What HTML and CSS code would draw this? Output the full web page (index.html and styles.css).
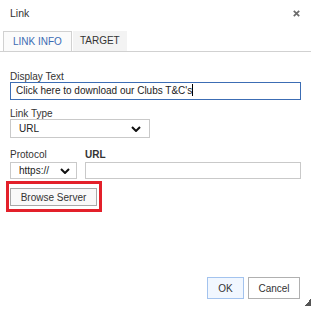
FILE: index.html
```html
<!DOCTYPE html>
<html lang="en">
<head>
  <meta charset="UTF-8" />
  <title>Link</title>
  <link rel="stylesheet" href="styles.css">
</head>
<body>

<div class="dialog">
  <div class="title-bar">
    <span class="title">Link</span>
    <svg class="close" width="7" height="7" viewBox="0 0 7 7">
      <path d="M0.8 0.8 L6.2 6.2 M6.2 0.8 L0.8 6.2" stroke="#6b6b6b" stroke-width="1.7" />
    </svg>
  </div>

  <div class="tabs">
    <div class="tab tab-active">LINK INFO</div>
    <div class="tab">TARGET</div>
  </div>

  <div class="content">
    <label class="field-label">Display Text</label>
    <div class="input input-focus">Click here to download our Clubs T&amp;C's<span class="caret"></span></div>

    <label class="field-label label-gap">Link Type</label>
    <div class="select select-type">
      <span>URL</span>
      <svg width="10" height="6" viewBox="0 0 10 6"><path d="M1 1 L5 5 L9 1" fill="none" stroke="#111" stroke-width="2" /></svg>
    </div>

    <div class="url-row">
      <div class="protocol">
        <label class="field-label">Protocol</label>
        <div class="select select-protocol">
          <span>https://</span>
          <svg width="10" height="6" viewBox="0 0 10 6"><path d="M1 1 L5 5 L9 1" fill="none" stroke="#111" stroke-width="2" /></svg>
        </div>
      </div>
      <div class="url">
        <label class="field-label bold">URL</label>
        <div class="input input-url"></div>
      </div>
    </div>

    <div class="highlight">
      <div class="button browse">Browse Server</div>
    </div>
  </div>

  <div class="footer">
    <div class="button ok">OK</div>
    <div class="button cancel">Cancel</div>
  </div>

  <div class="grip"></div>
</div>

</body>
</html>
```

FILE: styles.css
```css
* { margin: 0; padding: 0; box-sizing: border-box; }

body {
  font-family: 'Liberation Sans', Arial, sans-serif;
  font-size: 10px;
  color: #333;
  background: #fff;
}

.dialog {
  position: relative;
  width: 311px;
  height: 307px;
  display: flex;
  flex-direction: column;
}

.title-bar {
  height: 31px;
  padding: 7px 11px 0 10px;
  display: flex;
  justify-content: space-between;
  align-items: flex-start;
}

.title {
  font-size: 10.5px;
  line-height: 12px;
  color: #333;
}

.close {
  margin-top: 3px;
}

.tabs {
  height: 21px;
  padding-left: 3px;
  display: flex;
  gap: 1px;
  border-bottom: 1px solid #d1d1d1;
}

.tab {
  height: 20px;
  line-height: 20px;
  padding: 0 7px;
  background: #f3f3f3;
  color: #333;
}

.tab-active {
  padding: 0 9px;
  background: #fbfbfb;
  color: #3b6bb3;
  border: 1px solid #d1d1d1;
  border-bottom: none;
  line-height: 19px;
}

.content {
  padding: 20px 10px 0 10px;
  display: flex;
  flex-direction: column;
}

.field-label {
  display: block;
  height: 10px;
  line-height: 10px;
  color: #333;
}

.label-gap {
  margin-top: 9px;
}

.bold {
  font-weight: bold;
}

.input {
  height: 18px;
  line-height: 16px;
  padding: 0 5px;
  border: 1px solid #c9c9c9;
  background: #fff;
  color: #222;
  white-space: nowrap;
}

.input-focus {
  border-color: #3c6db4;
}

.caret {
  display: inline-block;
  width: 1px;
  height: 12px;
  background: #000;
  vertical-align: -2px;
}

.select {
  display: flex;
  justify-content: space-between;
  align-items: center;
  border: 1px solid #c9c9c9;
  background: #fff;
  color: #222;
  padding: 0 8px 0 8px;
}

.select-type {
  width: 140px;
  height: 19px;
}

.url-row {
  margin-top: 12px;
  display: flex;
  gap: 8px;
}

.url-row .field-label {
  margin-bottom: 2px;
}

.protocol {
  width: 67px;
}

.select-protocol {
  height: 17px;
  padding: 0 6px 0 8px;
}

.url {
  flex: 1;
}

.input-url {
  height: 17px;
}

.highlight {
  margin: 2px 0 0 -4px;
  width: 96px;
  height: 31px;
  border: 3px solid #e3202a;
  padding: 4px 0 0 1px;
}

.button {
  display: flex;
  justify-content: center;
  align-items: center;
  border: 1px solid #b0b0b0;
  background: #fff;
  color: #333;
}

.browse {
  width: 87px;
  height: 18px;
  background: #f9f9f9;
  border-color: #a8a8a8;
}

.footer {
  margin-top: auto;
  padding: 0 11px 8px 0;
  display: flex;
  justify-content: flex-end;
  gap: 4px;
}

.ok {
  width: 37px;
  height: 22px;
  background: #f1f7ff;
  border-color: #a3c3ee;
}

.cancel {
  width: 52px;
  height: 22px;
}

.grip {
  position: absolute;
  right: 0;
  bottom: 1px;
  width: 7px;
  height: 7px;
  background: linear-gradient(135deg, transparent 50%, #555 50%);
}
```
